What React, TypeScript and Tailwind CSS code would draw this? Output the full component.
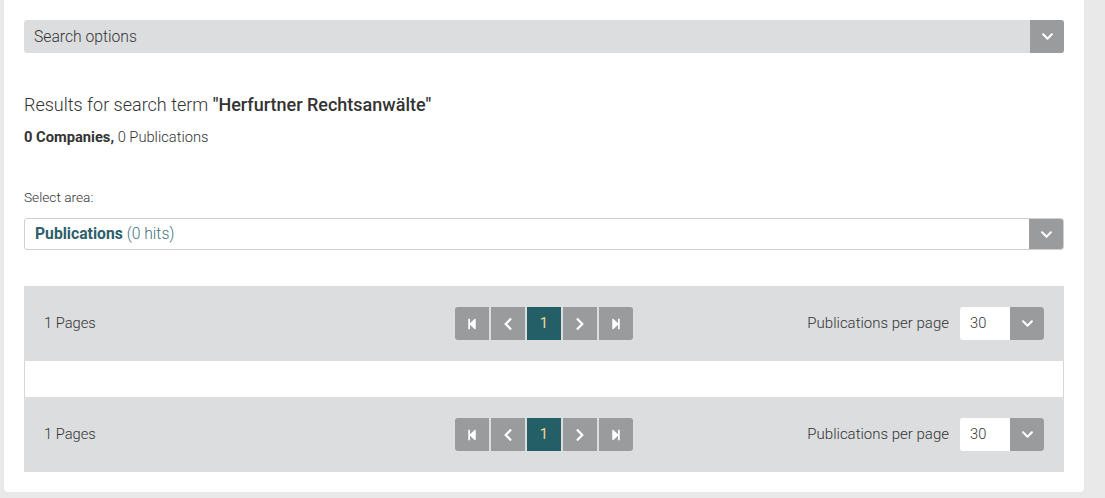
import { FaChevronDown, FaChevronLeft, FaChevronRight, FaStepBackward, FaStepForward } from 'react-icons/fa'

const font = "font-['Roboto','Liberation_Sans',sans-serif]"

function PagerBar() {
  return (
    <div className="flex h-[75px] items-center bg-[#dcdddf] px-5">
      <div className="flex-1 text-[14.7px] font-light text-[#333]">1 Pages</div>
      <div className="flex gap-[2px]">
        <button className="flex h-[33px] w-[34px] items-center justify-center rounded-l-[3px] bg-[#999b9d] text-white">
          <FaStepBackward size={12} />
        </button>
        <button className="flex h-[33px] w-[34px] items-center justify-center bg-[#999b9d] text-white">
          <FaChevronLeft size={14} />
        </button>
        <button className="flex h-[33px] w-[34px] items-center justify-center bg-[#245f67] text-[14.7px] text-[#ecd88f]">
          1
        </button>
        <button className="flex h-[33px] w-[34px] items-center justify-center bg-[#999b9d] text-white">
          <FaChevronRight size={14} />
        </button>
        <button className="flex h-[33px] w-[34px] items-center justify-center rounded-r-[3px] bg-[#999b9d] text-white">
          <FaStepForward size={12} />
        </button>
      </div>
      <div className="flex flex-1 items-center justify-end gap-[11px]">
        <span className="text-[15px] font-light text-[#333]">Publications per page</span>
        <div className="flex h-[33px] w-[84px] overflow-hidden rounded-[3px] bg-white">
          <span className="flex-1 pl-[10px] pt-[5px] text-[14.7px] font-light text-[#333]">30</span>
          <span className="flex w-[34px] items-center justify-center bg-[#999b9d] text-white">
            <FaChevronDown size={13} />
          </span>
        </div>
      </div>
    </div>
  )
}

export default function App() {
  return (
    <div className={`h-[498px] w-full overflow-hidden bg-[#e9e9e9] ${font}`}>
      <div className="ml-[4px] w-[1080px] rounded-b-[4px] bg-white px-5 pb-5 pt-5">
        <div className="flex h-[33px] items-center overflow-hidden rounded-[3px] bg-[#dcdddf]">
          <span className="flex-1 pl-[10px] text-[15.7px] font-light text-[#333]">Search options</span>
          <span className="flex h-full w-[34px] items-center justify-center bg-[#999b9d] text-white">
            <FaChevronDown size={13} />
          </span>
        </div>

        <h2 className="mt-[40px] text-[18px] leading-[24px] font-light text-[#333]">
          Results for search term <span className="font-medium">"Herfurtner Rechtsanwälte"</span>
        </h2>
        <p className="mt-[10px] text-[14.7px] leading-[20px] font-light text-[#333]">
          <span className="font-bold">0 Companies,</span> 0 Publications
        </p>

        <p className="mt-[41px] text-[13.7px] leading-[18px] font-light text-[#333]">Select area:</p>
        <div className="mt-[12px] flex h-[32px] items-center overflow-hidden rounded-[3px] border border-[#d0d0d0] bg-white">
          <span className="flex-1 pl-[10px] text-[15.7px] text-[#2d5f6c]">
            <span className="font-bold">Publications</span> <span className="font-light text-[#3f7280]">(0 hits)</span>
          </span>
          <span className="flex h-[32px] w-[34px] items-center justify-center bg-[#999b9d] text-white">
            <FaChevronDown size={13} />
          </span>
        </div>

        <div className="mt-[36px]">
          <PagerBar />
          <div className="h-[36px] border-x border-[#d6d6d6] bg-white" />
          <PagerBar />
        </div>
      </div>
    </div>
  )
}
